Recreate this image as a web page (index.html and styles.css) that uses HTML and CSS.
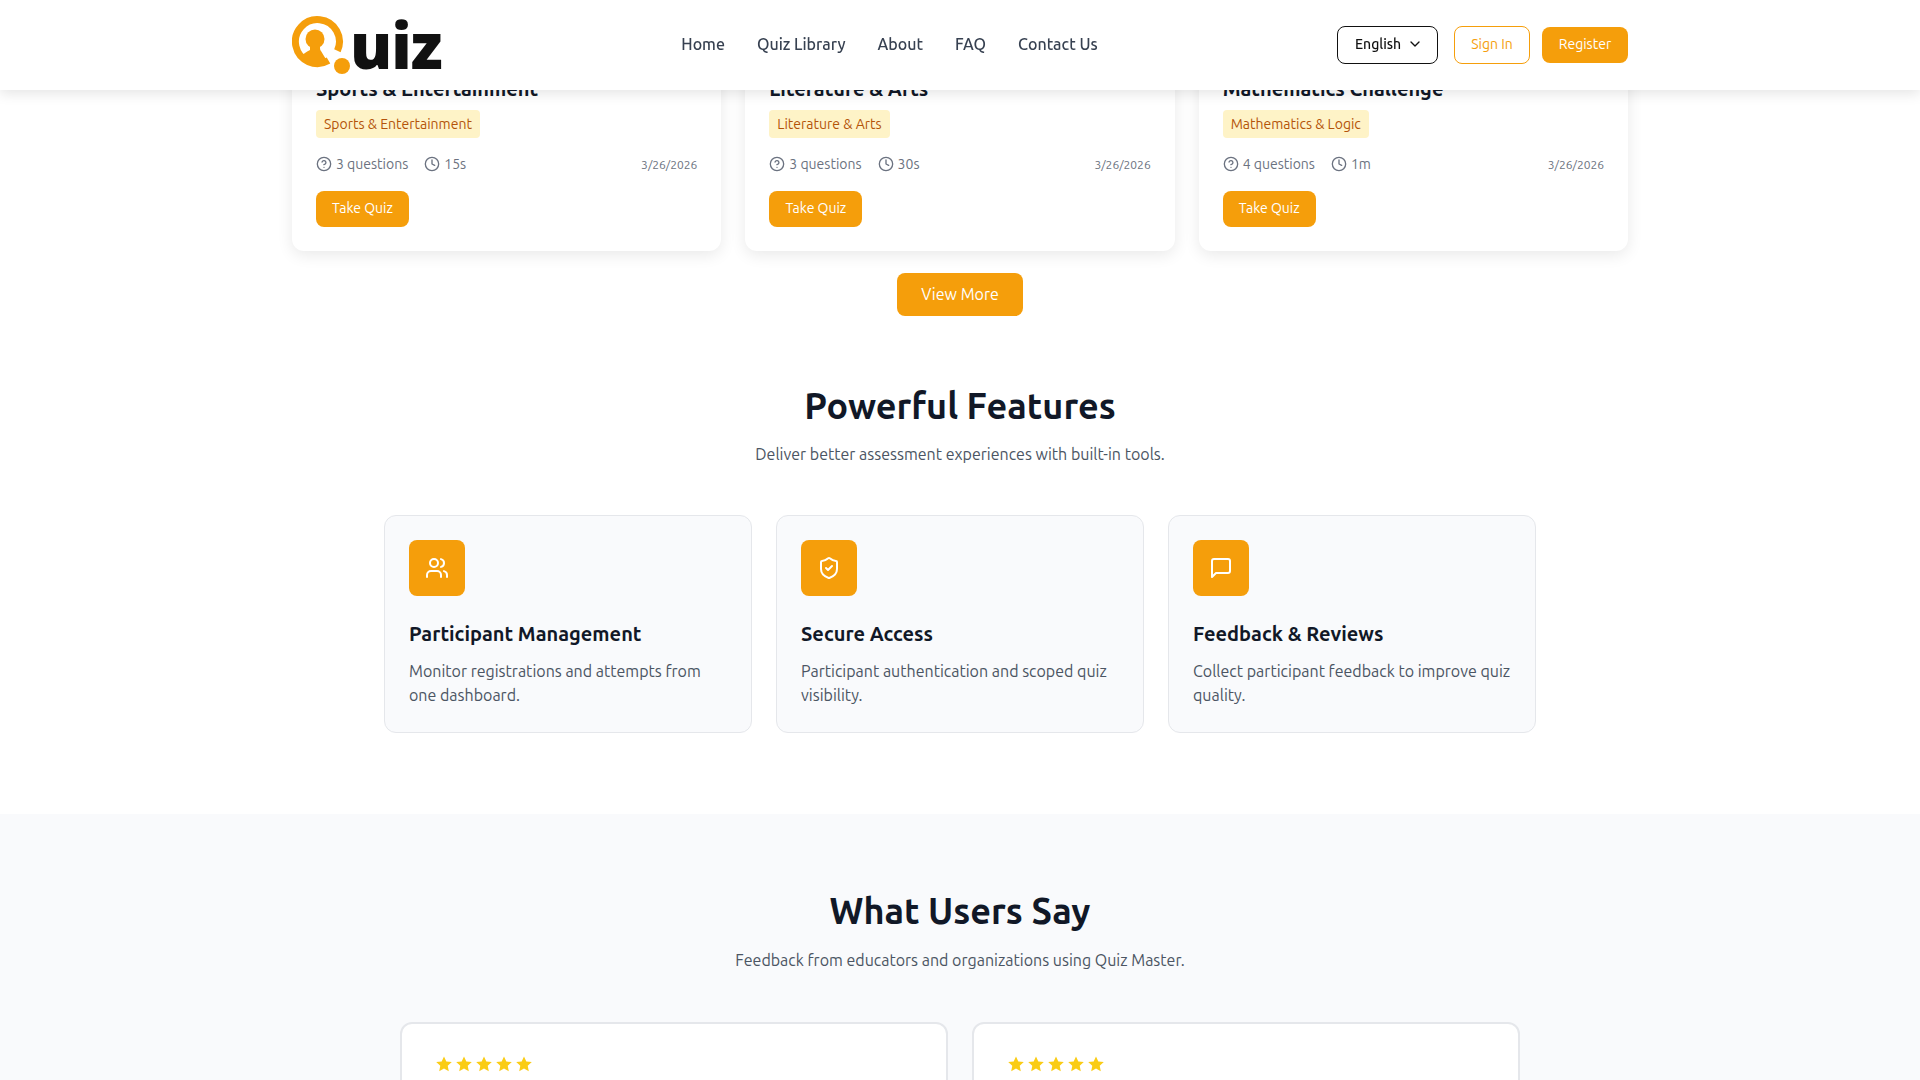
FILE: index.html
```html
<!DOCTYPE html>
<html lang="en">
<head>
<meta charset="utf-8">
<title>Quiz</title>
<link rel="stylesheet" href="styles.css">
</head>
<body>
<svg class="sprite" width="0" height="0" aria-hidden="true">
  <symbol id="i-help" viewBox="0 0 24 24"><circle cx="12" cy="12" r="10"/><path d="M9.09 9a3 3 0 0 1 5.83 1c0 2-3 3-3 3"/><path d="M12 17h.01"/></symbol>
  <symbol id="i-clock" viewBox="0 0 24 24"><circle cx="12" cy="12" r="10"/><polyline points="12 6 12 12 16 14"/></symbol>
  <symbol id="i-star" viewBox="1 1 22 22"><path d="M12 1.6l3.2 6.900 7.500.9-5.600 5.100 1.500 7.400-6.600-3.700-6.600 3.700 1.500-7.400-5.600-5.100 7.500-.9z"/></symbol>
</svg>
<header class="topbar">
  <div class="topbar-inner">
    <a class="logo" href="#">
      <svg class="logo-mark" width="60" height="60" viewBox="0 0 60 60">
        <path class="logo-ring" d="M36.500 44.600A22 22 0 1 1 45.400 34.800"/>
        <circle class="logo-fill" cx="23" cy="23" r="9.500"/>
        <path class="logo-fill" d="M18 30v4c-4 2-7 4-10 7A22 22 0 0 0 35 45l-6-10c-1-1-1-2-1-5z"/>
        <circle class="logo-fill" cx="50" cy="50" r="8"/>
      </svg>
      <span class="logo-text">uiz</span>
    </a>
    <nav class="nav">
      <a href="#">Home</a>
      <a href="#">Quiz Library</a>
      <a href="#">About</a>
      <a href="#">FAQ</a>
      <a href="#">Contact Us</a>
    </nav>
    <div class="actions">
      <button class="lang">English
        <svg class="line-icon" width="16" height="16" viewBox="0 0 24 24"><path d="m6 9 6 6 6-6"/></svg>
      </button>
      <button class="btn-outline">Sign In</button>
      <button class="btn btn-register">Register</button>
    </div>
  </div>
</header>

<main>
  <section class="quizzes">
    <div class="quiz-grid">
      <article class="quiz-card">
        <h3>Sports &amp; Entertainment</h3>
        <span class="tag">Sports &amp; Entertainment</span>
        <div class="meta">
          <span class="meta-item"><svg class="line-icon meta-icon"><use href="#i-help"/></svg>3 questions</span>
          <span class="meta-item"><svg class="line-icon meta-icon"><use href="#i-clock"/></svg>15s</span>
          <span class="date">3/26/2026</span>
        </div>
        <button class="btn btn-take">Take Quiz</button>
      </article>
      <article class="quiz-card">
        <h3>Literature &amp; Arts</h3>
        <span class="tag">Literature &amp; Arts</span>
        <div class="meta">
          <span class="meta-item"><svg class="line-icon meta-icon"><use href="#i-help"/></svg>3 questions</span>
          <span class="meta-item"><svg class="line-icon meta-icon"><use href="#i-clock"/></svg>30s</span>
          <span class="date">3/26/2026</span>
        </div>
        <button class="btn btn-take">Take Quiz</button>
      </article>
      <article class="quiz-card">
        <h3>Mathematics Challenge</h3>
        <span class="tag">Mathematics &amp; Logic</span>
        <div class="meta">
          <span class="meta-item"><svg class="line-icon meta-icon"><use href="#i-help"/></svg>4 questions</span>
          <span class="meta-item"><svg class="line-icon meta-icon"><use href="#i-clock"/></svg>1m</span>
          <span class="date">3/26/2026</span>
        </div>
        <button class="btn btn-take">Take Quiz</button>
      </article>
    </div>
    <div class="more"><button class="btn btn-more">View More</button></div>
  </section>

  <section class="features">
    <h2>Powerful Features</h2>
    <p class="lead">Deliver better assessment experiences with built-in tools.</p>
    <div class="feature-grid">
      <article class="feature-card">
        <div class="feature-icon"><svg class="line-icon" width="24" height="24" viewBox="0 0 24 24"><path d="M16 21v-2a4 4 0 0 0-4-4H6a4 4 0 0 0-4 4v2"/><circle cx="9" cy="7" r="4"/><path d="M22 21v-2a4 4 0 0 0-3-3.870"/><path d="M16 3.130a4 4 0 0 1 0 7.750"/></svg></div>
        <h3>Participant Management</h3>
        <p>Monitor registrations and attempts from one dashboard.</p>
      </article>
      <article class="feature-card">
        <div class="feature-icon"><svg class="line-icon" width="24" height="24" viewBox="0 0 24 24"><path d="M20 13c0 5-3.500 7.500-7.660 8.950a1 1 0 0 1-.67-.01C7.500 20.500 4 18 4 13V6a1 1 0 0 1 1-1c2 0 4.500-1.200 6.240-2.720a1.170 1.170 0 0 1 1.520 0C14.510 3.810 17 5 19 5a1 1 0 0 1 1 1z"/><path d="m9 12 2 2 4-4"/></svg></div>
        <h3>Secure Access</h3>
        <p>Participant authentication and scoped quiz visibility.</p>
      </article>
      <article class="feature-card">
        <div class="feature-icon"><svg class="line-icon" width="24" height="24" viewBox="0 0 24 24"><path d="M21 15a2 2 0 0 1-2 2H7l-4 4V5a2 2 0 0 1 2-2h14a2 2 0 0 1 2 2z"/></svg></div>
        <h3>Feedback &amp; Reviews</h3>
        <p>Collect participant feedback to improve quiz quality.</p>
      </article>
    </div>
  </section>

  <section class="testimonials">
    <h2>What Users Say</h2>
    <p class="lead lead-tight">Feedback from educators and organizations using Quiz Master.</p>
    <div class="testimonial-grid">
      <article class="testimonial-card">
        <div class="stars"><svg><use href="#i-star"/></svg><svg><use href="#i-star"/></svg><svg><use href="#i-star"/></svg><svg><use href="#i-star"/></svg><svg><use href="#i-star"/></svg></div>
      </article>
      <article class="testimonial-card">
        <div class="stars"><svg><use href="#i-star"/></svg><svg><use href="#i-star"/></svg><svg><use href="#i-star"/></svg><svg><use href="#i-star"/></svg><svg><use href="#i-star"/></svg></div>
      </article>
    </div>
  </section>
</main>
</body>
</html>
```

FILE: styles.css
```css
* { box-sizing: border-box; }
html, body { height: 1080px; overflow: hidden; }
body { margin: 0; background: #fff; color: #111827; font-family: Ubuntu, "Noto Sans", "Open Sans", sans-serif; font-size: 16px; }
h2, h3, p { margin: 0; }
button { font: inherit; cursor: pointer; }
a { color: inherit; text-decoration: none; }
.sprite { position: absolute; }

.line-icon { fill: none; stroke: currentColor; stroke-width: 2; stroke-linecap: round; stroke-linejoin: round; flex: none; }

.topbar { position: fixed; top: 0; left: 0; right: 0; height: 90px; background: #fff; box-shadow: 0 4px 12px rgba(0,0,0,.1); z-index: 10; }
.topbar-inner { width: 1336px; height: 90px; margin: 0 auto; display: flex; align-items: center; justify-content: space-between; }
.logo { display: flex; align-items: flex-start; width: 150px; height: 60px; }
.logo-mark { flex: none; margin-top: 1px; }
.logo-ring { fill: none; stroke: #f59e0b; stroke-width: 7; }
.logo-fill { fill: #f59e0b; }
.logo-text { font-family: "Open Sans", sans-serif; font-weight: 800; font-size: 63px; line-height: 60px; color: #111; margin-left: -2px; letter-spacing: -1px; }
.nav { display: flex; gap: 32px; margin-bottom: 2px; color: #374151; font-weight: 500; }
.actions { display: flex; align-items: center; gap: 12px; }
.lang { display: flex; align-items: center; gap: 6px; height: 38px; width: 101px; padding: 0 16px 2px 17px; background: #fff; border: 1px solid #111; border-radius: 8px; font-size: 14px; font-weight: 500; color: #111; margin-right: 4px; }
.btn-outline { height: 38px; width: 76px; padding: 0 0 2px; background: #fff; border: 1px solid #f59e0b; border-radius: 8px; color: #f59e0b; font-size: 14px; }
.btn { border: 0; background: #f59e0b; color: #fff; border-radius: 8px; padding: 0 0 2px; }
.btn-register { height: 36px; width: 86px; font-size: 14px; }

main { padding-top: 50px; }
.quiz-grid { width: 1336px; margin: 0 auto; display: grid; grid-template-columns: repeat(3, 1fr); gap: 24px; }
.quiz-card { background: #fff; border-radius: 12px; padding: 25px 24px 24px; box-shadow: 0 4px 16px rgba(0,0,0,.09); display: flex; flex-direction: column; align-items: flex-start; }
.quiz-card h3 { font-size: 20px; line-height: 28px; font-weight: 700; color: #111827; margin-bottom: 7px; }
.tag { height: 28px; padding: 0 8px; display: flex; align-items: center; background: #fef3c7; color: #b45309; border-radius: 4px; font-size: 14px; }
.meta { align-self: stretch; display: flex; align-items: center; gap: 16px; margin-top: 16px; height: 20px; font-size: 14px; color: #6b7280; }
.meta-item { display: flex; align-items: center; gap: 4px; }
.meta-icon { width: 16px; height: 16px; }
.date { margin-left: auto; font-size: 12px; }
.btn-take { width: 93px; height: 36px; margin-top: 17px; font-size: 14px; }
.more { display: flex; justify-content: center; margin-top: 22px; }
.btn-more { width: 126px; height: 43px; font-size: 16px; }

.features { padding: 70px 0 81px; text-align: center; }
h2 { font-size: 36px; line-height: 40px; font-weight: 700; color: #111827; }
.lead { margin-top: 14px; line-height: 28px; color: #4b5563; }
.lead-tight { margin-top: 15px; }
.feature-grid { width: 1152px; margin: 47px auto 0; display: grid; grid-template-columns: repeat(3, 1fr); gap: 24px; text-align: left; }
.feature-card { padding: 24px 24px 25px; background: #f9fafc; border: 1px solid #e5e7eb; border-radius: 12px; }
.feature-icon { width: 56px; height: 56px; border-radius: 8px; background: #f59e0b; color: #fff; display: flex; align-items: center; justify-content: center; margin-bottom: 24px; }
.feature-card h3 { font-size: 20px; line-height: 28px; font-weight: 700; color: #111827; margin-bottom: 11px; }
.feature-card p { line-height: 24px; color: #4b5563; }

.testimonials { background: #f9fafc; padding-top: 77px; height: 400px; text-align: center; }
.testimonial-grid { width: 1120px; margin: 48px auto 0; display: grid; grid-template-columns: repeat(2, 1fr); gap: 24px; text-align: left; }
.testimonial-card { height: 200px; padding: 32px 34px; background: #fff; border: 2px solid #e5e7eb; border-radius: 12px; }
.stars { display: flex; gap: 4px; }
.stars svg { width: 16px; height: 16px; fill: #facc15; }
```
